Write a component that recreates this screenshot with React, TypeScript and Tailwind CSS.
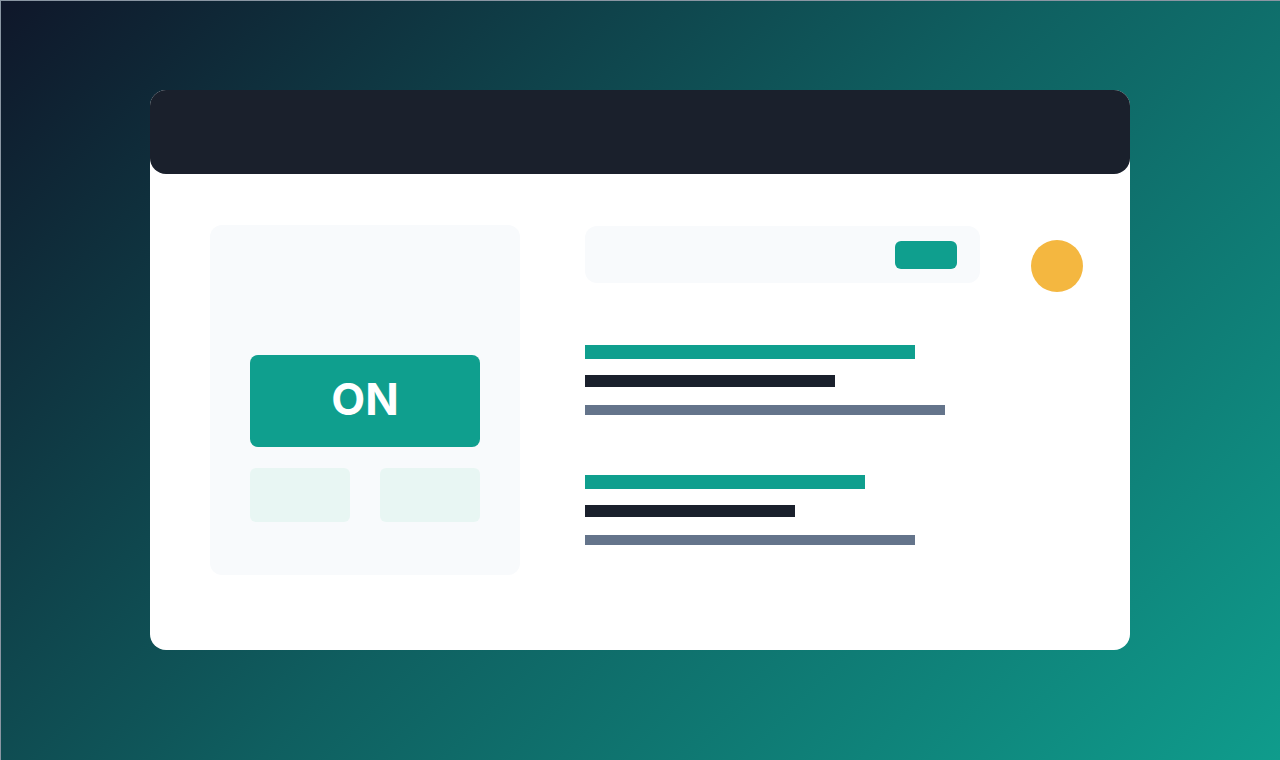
const Line = ({ w, h, color }: { w: string; h: string; color: string }) => (
  <div className={`${w} ${h} ${color}`} />
);

export default function App() {
  return (
    <div className="w-[1280px] h-[760px] overflow-hidden bg-[linear-gradient(135deg,#0f172a_0%,#0f5f60_50%,#0f9c8c_100%)] border-t border-l border-[#8a96a3] pt-[89px] pl-[149px]">
      <div className="w-[980px] h-[560px] bg-white rounded-2xl flex flex-col">
        <div className="h-[84px] bg-[#1a202c] rounded-2xl" />
        <div className="flex pt-[51px] pl-[60px]">
          {/* left panel */}
          <div className="w-[310px] h-[350px] bg-[#f8fafc] rounded-xl pt-[130px] px-[40px]">
            <div className="h-[92px] bg-[#0f9f8e] rounded-lg flex items-center justify-center pb-[4px]">
              <span className="text-white font-bold text-[44px] leading-none [font-family:Inter,sans-serif]">ON</span>
            </div>
            <div className="flex gap-[30px] mt-[21px]">
              <div className="w-[100px] h-[54px] bg-[#e8f6f3] rounded-md" />
              <div className="w-[100px] h-[54px] bg-[#e8f6f3] rounded-md" />
            </div>
          </div>

          {/* right column */}
          <div className="ml-[65px] flex flex-col">
            <div className="flex items-start">
              <div className="w-[395px] h-[57px] mt-px bg-[#f8fafc] rounded-xl flex items-center justify-end pr-[23px]">
                <div className="w-[62px] h-[28px] bg-[#0f9f8e] rounded-md" />
              </div>
              <div className="w-[52px] h-[52px] rounded-full bg-[#f4b740] ml-[51px] mt-[15px]" />
            </div>

            <div className="flex flex-col mt-[53px]">
              <Line w="w-[330px]" h="h-[14px]" color="bg-[#0f9f8e]" />
              <div className="h-[16px]" />
              <Line w="w-[250px]" h="h-[12px]" color="bg-[#1a202c]" />
              <div className="h-[18px]" />
              <Line w="w-[360px]" h="h-[10px]" color="bg-[#64748b]" />
            </div>

            <div className="flex flex-col mt-[60px]">
              <Line w="w-[280px]" h="h-[14px]" color="bg-[#0f9f8e]" />
              <div className="h-[16px]" />
              <Line w="w-[210px]" h="h-[12px]" color="bg-[#1a202c]" />
              <div className="h-[18px]" />
              <Line w="w-[330px]" h="h-[10px]" color="bg-[#64748b]" />
            </div>
          </div>
        </div>
      </div>
    </div>
  );
}
